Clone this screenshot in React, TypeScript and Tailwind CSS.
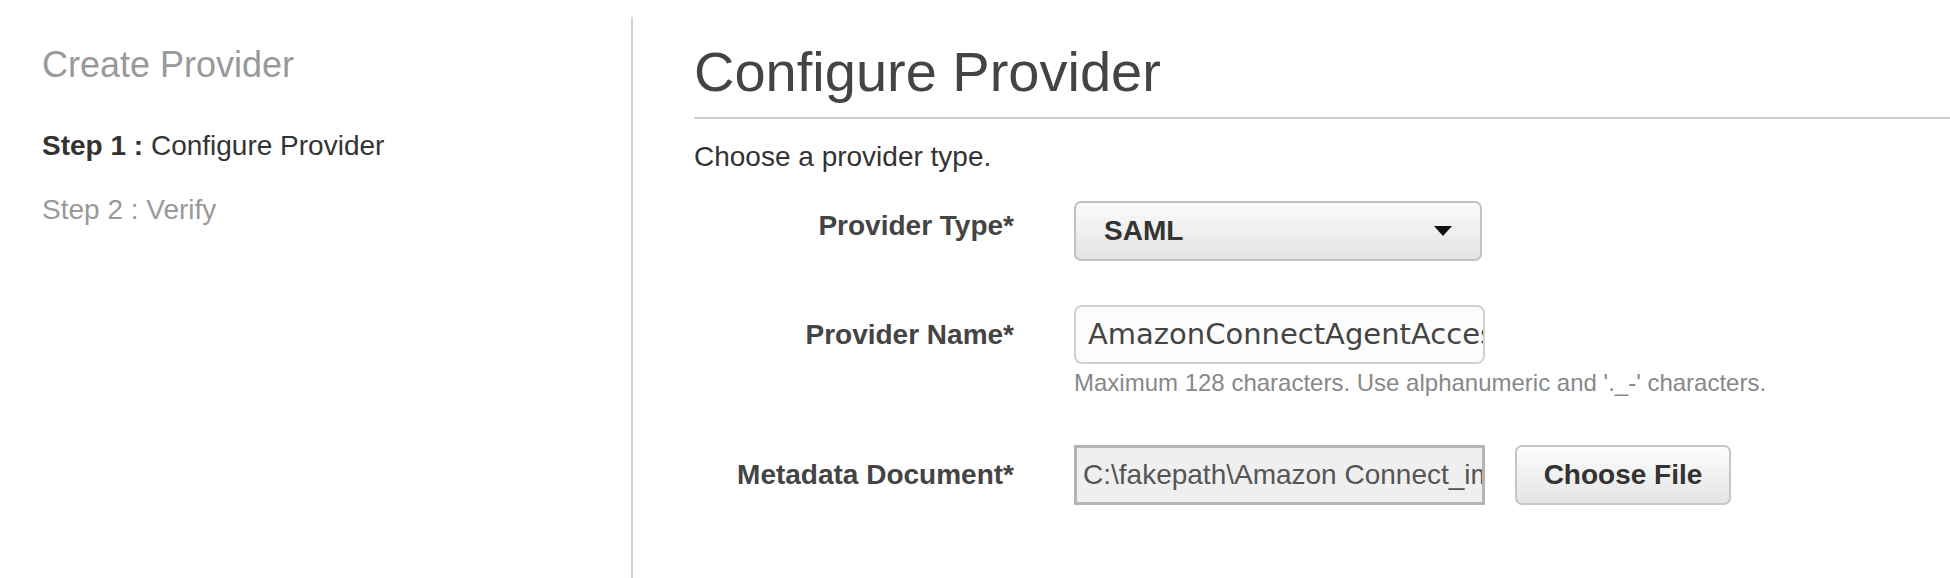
import React from "react";

const sans = { fontFamily: '"Liberation Sans", Arial, Helvetica, sans-serif' };

function Sidebar() {
  return (
    <div className="w-[633px] shrink-0 mt-[17px] border-r-2 border-[#d2d2d2] pl-[42px] pt-[26px]">
      <div className="text-[36px] leading-[44px] text-[#999999]">Create Provider</div>
      <div className="mt-[39px] text-[28px] leading-[40px] text-[#333333]">
        <span className="font-bold">Step 1 :</span> Configure Provider
      </div>
      <div className="mt-[24px] text-[28px] leading-[40px] text-[#999999]">Step 2 : Verify</div>
    </div>
  );
}

function FormRow({ label, labelClass, children }: { label: string; labelClass: string; children: React.ReactNode }) {
  return (
    <div className="flex items-start">
      <div className={`w-[320px] shrink-0 text-right text-[28px] font-bold text-[#444444] ${labelClass}`}>{label}</div>
      <div className="ml-[60px] flex flex-col">{children}</div>
    </div>
  );
}

export default function App() {
  return (
    <div className="flex w-[1950px] h-[578px] bg-white overflow-hidden" style={sans}>
      <Sidebar />
      <div className="flex-1 pt-[32px]">
        <h1 className="pl-[61px] text-[56px] leading-[80px] text-[#444444]">Configure Provider</h1>
        <div className="ml-[61px] mt-[5px] h-[2px] bg-[#cccccc]" />
        <p className="pl-[61px] mt-[20px] text-[28px] leading-[36px] text-[#333333]">Choose a provider type.</p>

        <div className="pl-[61px] mt-[26px]">
          <FormRow label="Provider Type*" labelClass="leading-[50px]">
            <div className="w-[408px] h-[60px] flex items-center justify-between pl-[28px] pr-[28px] rounded-[7px] border-2 border-[#c2c2c2] bg-gradient-to-b from-[#fbfbfb] to-[#e3e3e3]">
              <span className="text-[28px] font-bold text-[#333333]">SAML</span>
              <svg width="18" height="10" viewBox="0 0 18 10">
                <path d="M0 0 L18 0 L9 10 Z" fill="#111111" />
              </svg>
            </div>
          </FormRow>
        </div>

        <div className="pl-[61px] mt-[44px]">
          <FormRow label="Provider Name*" labelClass="leading-[60px]">
            <div
              className="w-[411px] h-[59px] flex items-center pl-[12px] rounded-[8px] border-2 border-[#d0d0d0] bg-[#fcfcfc] overflow-hidden whitespace-nowrap text-[29px] text-[#444444]"
              style={{ fontFamily: '"DejaVu Sans", Verdana, sans-serif' }}
            >
              AmazonConnectAgentAccess
            </div>
            <div className="mt-[4px] text-[24px] leading-[30px] text-[#888888]">
              Maximum 128 characters. Use alphanumeric and '._-' characters.
            </div>
          </FormRow>
        </div>

        <div className="pl-[61px] mt-[47px]">
          <FormRow label="Metadata Document*" labelClass="leading-[60px]">
            <div className="flex items-center">
              <div className="w-[411px] h-[60px] flex items-center pl-[6px] border-[3px] border-[#b4b4b4] bg-[#efefef] overflow-hidden whitespace-nowrap text-[28px] text-[#555555]">
                C:\fakepath\Amazon Connect_import_metadata.xml
              </div>
              <button className="ml-[30px] w-[216px] h-[60px] rounded-[7px] border-2 border-[#c6c6c6] bg-gradient-to-b from-[#fdfdfd] to-[#e4e4e4] text-[28px] font-bold text-[#333333]">
                Choose File
              </button>
            </div>
          </FormRow>
        </div>
      </div>
    </div>
  );
}
